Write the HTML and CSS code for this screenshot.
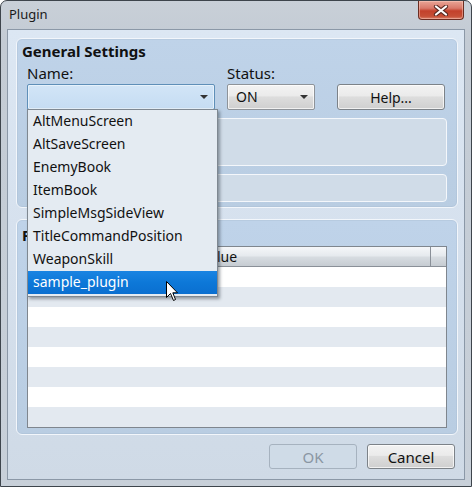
FILE: index.html
```html
<!DOCTYPE html>
<html>
<head>
<meta charset="utf-8">
<link rel="stylesheet" href="styles.css">
</head>
<body>
<div class="window">
  <div class="titlebar">
    <span class="title">Plugin</span>
    <div class="close">
      <svg width="18" height="11" viewBox="0 0 18 11">
        <path d="M4 1.5 L14 9.5 M14 1.5 L4 9.5" stroke="#5a2a22" stroke-width="4.2" stroke-linecap="round"/>
        <path d="M4 1.5 L14 9.5 M14 1.5 L4 9.5" stroke="#ffffff" stroke-width="2.2" stroke-linecap="round"/>
      </svg>
    </div>
  </div>
  <div class="client">
    <div class="group group-general">
      <div class="group-title">General Settings</div>
      <div class="field-row">
        <div class="field field-name">
          <div class="label">Name:</div>
          <div class="combo combo-focus"><span class="arrow"></span></div>
        </div>
        <div class="field field-status">
          <div class="label">Status:</div>
          <div class="combo combo-btn"><span class="combo-text">ON</span><span class="arrow"></span></div>
        </div>
        <div class="field field-help">
          <div class="label">&nbsp;</div>
          <div class="button">Help...</div>
        </div>
      </div>
      <div class="inner-box box-desc"></div>
      <div class="inner-box box-author"></div>
    </div>
    <div class="group group-params">
      <div class="group-title">Parameters</div>
      <div class="table">
        <div class="thead">
          <div class="th th-name">Name</div>
          <div class="th th-value">Value</div>
          <div class="th th-end"></div>
        </div>
        <div class="row"></div>
        <div class="row alt"></div>
        <div class="row"></div>
        <div class="row alt"></div>
        <div class="row"></div>
        <div class="row alt"></div>
        <div class="row"></div>
        <div class="row alt"></div>
      </div>
    </div>
    <div class="buttons">
      <div class="button disabled">OK</div>
      <div class="button">Cancel</div>
    </div>
  </div>
  <div class="dropdown">
    <div class="item">AltMenuScreen</div>
    <div class="item">AltSaveScreen</div>
    <div class="item">EnemyBook</div>
    <div class="item">ItemBook</div>
    <div class="item">SimpleMsgSideView</div>
    <div class="item">TitleCommandPosition</div>
    <div class="item">WeaponSkill</div>
    <div class="item selected">sample_plugin</div>
  </div>
  <svg class="cursor" width="13" height="21" viewBox="0 0 13 21">
    <path d="M0.5 0.5 L0.5 16.5 L4.5 12.5 L7.5 19.5 L9.5 18.5 L6.8 11.8 L11.5 11.8 Z" fill="#ffffff" stroke="#000000" stroke-width="1" stroke-linejoin="miter"/>
  </svg>
</div>
</body>
</html>
```

FILE: styles.css
```css
* { box-sizing: border-box; }
html, body { margin: 0; padding: 0; }
body {
  width: 472px;
  height: 487px;
  background: #ffffff;
  font-family: "Noto Sans", "Open Sans", sans-serif;
  font-size: 13px;
  color: #111111;
  overflow: hidden;
}
.window {
  position: relative;
  width: 472px;
  height: 487px;
  border: 1px solid #3e454c;
  border-radius: 7px 7px 0 0;
  background: linear-gradient(180deg, #c9d0d8 0px, #c3cbd4 40px, #c8d0d9 487px);
  padding: 0 6px 6px 6px;
  display: flex;
  flex-direction: column;
}
.titlebar {
  height: 28px;
  flex: none;
  display: flex;
  align-items: center;
  padding-left: 2px;
  padding-bottom: 2px;
}
.title {
  font-size: 13px;
  color: #1a1a1a;
}
.close {
  position: absolute;
  top: 0px;
  left: 417px;
  width: 46px;
  height: 19px;
  border: 1px solid #6b2d22;
  border-top: none;
  border-radius: 0 0 4px 4px;
  background: linear-gradient(180deg, #e9a596 0%, #d9796a 40%, #c3412b 55%, #c64f36 85%, #d9826c 100%);
  box-shadow: inset 0 0 0 1px rgba(255, 210, 200, 0.45);
  display: flex;
  align-items: center;
  justify-content: center;
}
.client {
  flex: 1;
  border: 1px solid #8b98a7;
  background: linear-gradient(180deg, #dce7f3 0px, #d6e1ee 200px, #cfdae6 449px);
  padding: 8px 6px 0 8px;
  display: flex;
  flex-direction: column;
}
.group {
  border: 1px solid #f2f6fb;
  border-radius: 6px;
  background: linear-gradient(180deg, #bfd3e9 0%, #b9cde2 100%);
  box-shadow: inset 0 0 0 1px rgba(160, 180, 200, 0.25);
}
.group-general {
  height: 170px;
  padding: 2px 10px 0 10px;
}
.group-title {
  margin-left: -5px;
  font-weight: bold;
  font-size: 15px;
  line-height: 20px;
}
.field-row {
  display: flex;
  margin-top: 2px;
}
.label {
  line-height: 21px;
  height: 21px;
  font-size: 15px;
}
.field-name { width: 188px; }
.field-status { width: 88px; margin-left: 12px; }
.field-help { width: 108px; margin-left: 22px; }
.combo {
  position: relative;
  height: 26px;
  border-radius: 2px;
}
.combo-focus {
  border: 1px solid #5f8fb8;
  background: linear-gradient(180deg, #d2e5f7 0%, #c5dcf2 100%);
  box-shadow: inset 0 0 0 1px #e6f1fb;
}
.combo-btn {
  border: 1px solid #8e9399;
  background: linear-gradient(180deg, #f3f3f3 0%, #ebebeb 45%, #dddddd 50%, #cfcfcf 100%);
  box-shadow: inset 0 0 0 1px rgba(255, 255, 255, 0.7);
  padding-left: 8px;
  line-height: 24px;
  font-size: 14px;
}
.arrow {
  position: absolute;
  right: 6px;
  top: 10px;
  width: 0;
  height: 0;
  border-left: 4px solid transparent;
  border-right: 4px solid transparent;
  border-top: 4px solid #333333;
}
.button {
  height: 26px;
  border: 1px solid #7c8288;
  border-radius: 3px;
  background: linear-gradient(180deg, #f2f2f2 0%, #ebebeb 45%, #dddddd 50%, #cfcfcf 100%);
  box-shadow: inset 0 0 0 1px rgba(255, 255, 255, 0.7);
  display: flex;
  align-items: center;
  justify-content: center;
  font-size: 14px;
}
.inner-box {
  border: 1px solid #f4f7fb;
  border-radius: 4px;
  background: #d0dce8;
}
.box-desc { height: 48px; margin-top: 8px; }
.box-author { height: 28px; margin-top: 8px; }
.group-params {
  margin-top: 11px;
  height: 216px;
  padding: 6px 10px 6px 10px;
  display: flex;
  flex-direction: column;
}
.group-params .group-title {
  line-height: 18px;
}
.table {
  flex: 1;
  margin-top: 2px;
  border: 1px solid #7f868e;
  background: #ffffff;
  overflow: hidden;
}
.thead {
  display: flex;
  height: 20px;
  border-bottom: 1px solid #8a9098;
  background: linear-gradient(180deg, #f5f7f9 0%, #e6eaee 45%, #d6dbe0 55%, #c6ccd2 100%);
}
.th {
  font-size: 14px;
  line-height: 19px;
  padding-left: 5px;
  color: #111;
}
.th-name { width: 168px; }
.th-value { flex: 1; }
.th-end { width: 16px; border-left: 1px solid #8a9098; }
.row { height: 20px; background: #ffffff; }
.row.alt { background: #e3e9f0; }
.buttons {
  display: flex;
  justify-content: flex-end;
  gap: 10px;
  margin-top: 9px;
  padding-right: 3px;
}
.buttons .button { width: 88px; height: 25px; font-size: 15px; }
.button.disabled {
  color: #8a96a3;
  border-color: #a6b2bf;
  background: #cfdbe7;
  box-shadow: none;
}
.dropdown {
  position: absolute;
  left: 26px;
  top: 108px;
  width: 191px;
  height: 188px;
  border: 1px solid #7f8891;
  background: #e4ebf2;
  box-shadow: 2px 2px 3px rgba(40, 50, 60, 0.45);
}
.item {
  height: 23px;
  line-height: 22px;
  padding-left: 5px;
  font-size: 14px;
  color: #111;
}
.item.selected {
  background: linear-gradient(180deg, #1a84e2 0%, #0d78d8 50%, #0a6fd0 100%);
  color: #ffffff;
}
.cursor {
  position: absolute;
  left: 165px;
  top: 280px;
}
```
